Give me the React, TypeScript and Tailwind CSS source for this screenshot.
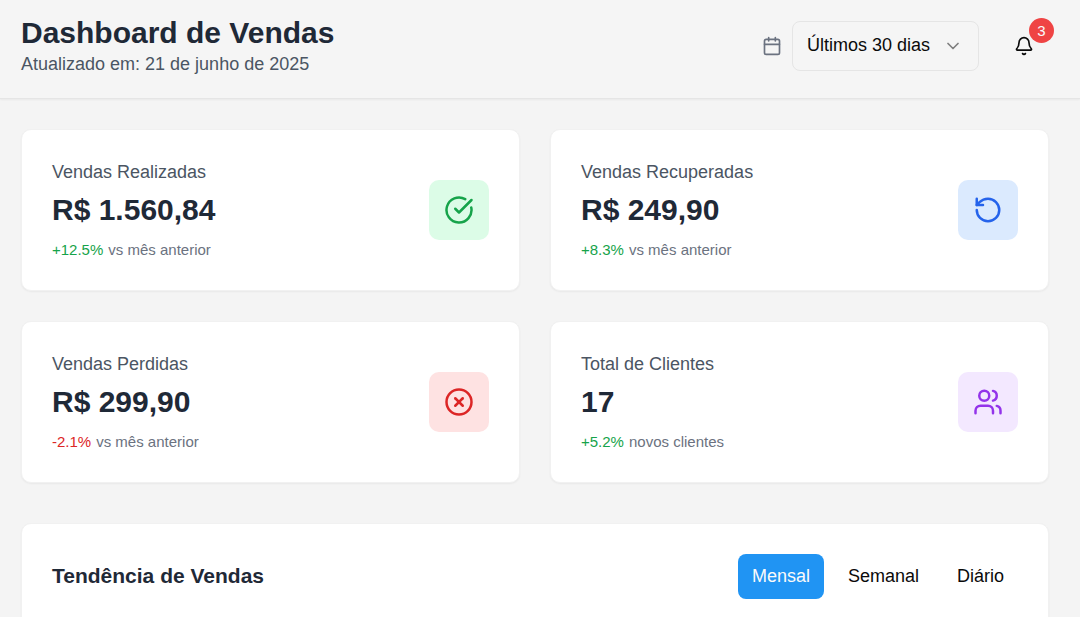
import { useState } from "react";
import {
  Bell,
  Calendar,
  ChevronDown,
  CircleCheckBig,
  CircleX,
  RotateCcw,
  Users,
  type LucideIcon,
} from "lucide-react";

type Stat = {
  label: string;
  value: string;
  change: string;
  changeClass: string;
  note: string;
  icon: LucideIcon;
  iconClass: string;
};

const stats: Stat[] = [
  {
    label: "Vendas Realizadas",
    value: "R$ 1.560,84",
    change: "+12.5%",
    changeClass: "text-[#16a34a]",
    note: "vs mês anterior",
    icon: CircleCheckBig,
    iconClass: "bg-[#dcfce7] text-[#16a34a]",
  },
  {
    label: "Vendas Recuperadas",
    value: "R$ 249,90",
    change: "+8.3%",
    changeClass: "text-[#16a34a]",
    note: "vs mês anterior",
    icon: RotateCcw,
    iconClass: "bg-[#dbeafe] text-[#2563eb]",
  },
  {
    label: "Vendas Perdidas",
    value: "R$ 299,90",
    change: "-2.1%",
    changeClass: "text-[#dc2626]",
    note: "vs mês anterior",
    icon: CircleX,
    iconClass: "bg-[#fee2e2] text-[#dc2626]",
  },
  {
    label: "Total de Clientes",
    value: "17",
    change: "+5.2%",
    changeClass: "text-[#16a34a]",
    note: "novos clientes",
    icon: Users,
    iconClass: "bg-[#f3e8ff] text-[#9333ea]",
  },
];

const ranges = ["Mensal", "Semanal", "Diário"];

function Header() {
  return (
    <header className="flex items-start justify-between border-b border-[#e5e5e5] bg-[#f5f5f5] pt-[14px] pr-[31px] pb-[21px] pl-[21px] shadow-xs">
      <div>
        <h1 className="text-[30px] leading-[38px] font-bold text-[#1f2937]">Dashboard de Vendas</h1>
        <p className="text-[18px] leading-[25px] text-[#4b5563]">Atualizado em: 21 de junho de 2025</p>
      </div>
      <div className="flex items-center gap-5 pt-[7px]">
        <div className="flex items-center gap-[10px]">
          <Calendar className="size-5 text-[#6b7280]" aria-hidden="true" />
          <div className="grid items-center">
            <select
              aria-label="Período"
              defaultValue="30"
              className="col-start-1 row-start-1 h-[50px] w-[187px] appearance-none rounded-lg border border-[#e5e5e5] bg-transparent pb-[2px] pl-[14px] text-[18px] text-[#0a0a0a]"
            >
              <option value="7">Últimos 7 dias</option>
              <option value="30">Últimos 30 dias</option>
              <option value="90">Últimos 90 dias</option>
            </select>
            <ChevronDown
              className="pointer-events-none col-start-1 row-start-1 mr-4 size-5 justify-self-end text-[#0a0a0a] opacity-50"
              aria-hidden="true"
            />
          </div>
        </div>
        <button
          type="button"
          aria-label="Notificações"
          className="relative flex h-[46px] w-[50px] items-center justify-center rounded-lg text-[#0a0a0a]"
        >
          <Bell className="size-5" aria-hidden="true" />
          <span className="absolute -top-[5px] -right-[5px] flex size-[25px] items-center justify-center rounded-full bg-[#ef4444] text-[15px] leading-5 text-[#fafafa]">
            3
          </span>
        </button>
      </div>
    </header>
  );
}

function StatCard({ stat }: { stat: Stat }) {
  const Icon = stat.icon;
  return (
    <article className="flex items-center justify-between rounded-[10px] border border-[#f1f1f1] bg-white p-[30px] shadow-xs">
      <div>
        <h2 className="text-[18px] leading-[25px] text-[#4b5563]">{stat.label}</h2>
        <p className="mt-[6px] text-[30px] leading-[38px] font-bold text-[#1f2937]">{stat.value}</p>
        <p className="mt-[11px] flex gap-[5px] text-[15px] leading-5 text-[#6b7280]">
          <span className={stat.changeClass}>{stat.change}</span>
          <span>{stat.note}</span>
        </p>
      </div>
      <div className={`flex size-[60px] items-center justify-center rounded-[10px] ${stat.iconClass}`}>
        <Icon className="size-[30px]" aria-hidden="true" />
      </div>
    </article>
  );
}

function TrendPanel() {
  const [active, setActive] = useState("Mensal");
  return (
    <section className="mt-10 flex min-h-[400px] items-start justify-between rounded-[10px] border border-[#f1f1f1] bg-white p-[30px] shadow-xs">
      <h2 className="text-[21px] leading-[44px] font-bold text-[#1f2937]">Tendência de Vendas</h2>
      <div className="flex gap-[10px]">
        {ranges.map((range) => (
          <button
            key={range}
            type="button"
            aria-pressed={range === active}
            onClick={() => setActive(range)}
            className={`h-[45px] rounded-lg px-[14px] text-[18px] ${
              range === active ? "bg-[#2094f3] text-[#fafafa]" : "text-[#0a0a0a]"
            }`}
          >
            {range}
          </button>
        ))}
      </div>
    </section>
  );
}

export default function App() {
  return (
    <div className="h-screen overflow-hidden bg-[#f4f4f4] font-['Liberation_Sans',Arial,sans-serif]">
      <Header />
      <main className="pt-[30px] pr-[31px] pl-[21px]">
        <div className="grid grid-cols-2 gap-[30px]">
          {stats.map((stat) => (
            <StatCard key={stat.label} stat={stat} />
          ))}
        </div>
        <TrendPanel />
      </main>
    </div>
  );
}
